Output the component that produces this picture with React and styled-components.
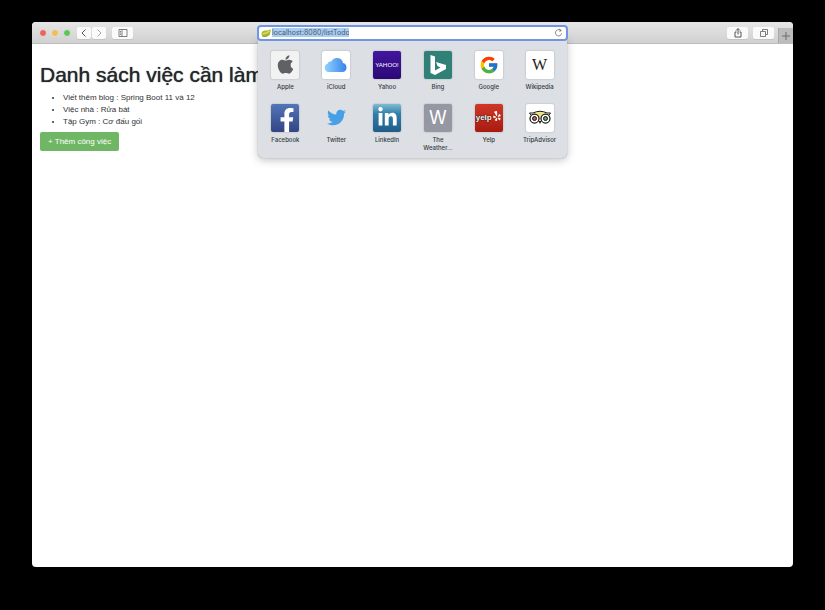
import React, { useId } from "react";
import styled, { createGlobalStyle, css } from "styled-components";
import { FaApple, FaFacebookF, FaLinkedinIn, FaTwitter, FaYelp } from "react-icons/fa";
import { FcGoogle } from "react-icons/fc";

const GlobalStyle = createGlobalStyle`
  *, *::before, *::after { box-sizing: border-box; }
  body {
    margin: 0;
    background: #000;
    font-family: "Liberation Sans", Arial, sans-serif;
  }
`;

const Desktop = styled.div`
  display: flex;
  min-height: 100vh;
  padding: 22px 32px 43px;
  background: #000;
`;

const BrowserWindow = styled.div`
  flex: 1;
  min-width: 0;
  display: flex;
  flex-direction: column;
  border-radius: 4px;
  background: #fff;
`;

const Toolbar = styled.header`
  display: grid;
  grid-template-columns: 1fr minmax(0, 311px) 1fr;
  align-items: center;
  height: 22px;
  border-radius: 4px 4px 0 0;
  border-bottom: 1px solid #bdbdbd;
  background: linear-gradient(#e6e6e6, #d0d0d0);
`;

const ToolGroup = styled.div`
  display: flex;
  align-items: center;
  align-self: stretch;
  justify-content: ${(p) => (p.$end ? "flex-end" : "flex-start")};
  padding-left: ${(p) => (p.$end ? "0" : "7px")};
`;

const TrafficLights = styled.div`
  display: flex;
  gap: 4px;
  margin-right: 6px;
`;

const Light = styled.button`
  width: 8px;
  height: 8px;
  padding: 0;
  border: 1px solid #e0dede;
  border-radius: 50%;
  background: ${(p) => p.$color};
`;

const ToolButton = styled.button`
  display: flex;
  align-items: center;
  justify-content: center;
  width: ${(p) => (p.$narrow ? "14px" : "21px")};
  height: 12px;
  padding: 0;
  border: 0;
  border-radius: 2px;
  background: #fafafa;
  color: ${(p) => (p.$faded ? "#a5a5a5" : "#555")};
  box-shadow: 0 1px 0 #c4c4c4;
`;

const NavPair = styled.div`
  display: flex;
  gap: 1px;
  margin-right: 6px;
`;

const ActionPair = styled.div`
  display: flex;
  gap: 5px;
  margin-right: 4px;
`;

const NewTab = styled.button`
  display: flex;
  align-items: center;
  justify-content: center;
  align-self: flex-end;
  width: 15px;
  height: 15px;
  padding: 0;
  border: 0;
  border-left: 1px solid #a9a9a9;
  background: #bcbcbc;
  color: #6c6c6c;
`;

const AddressArea = styled.div`
  position: relative;
`;

const AddressField = styled.div`
  position: relative;
  z-index: 2;
  display: flex;
  align-items: center;
  gap: 1px;
  height: 16px;
  padding: 0 3px 0 2px;
  border: 2px solid #6f95e4;
  border-radius: 4px;
  background: #fff;
`;

const AddressInput = styled.input`
  flex: none;
  width: 77px;
  height: 9px;
  padding: 0;
  border: 0;
  outline: 0;
  background: #a9cdf3;
  color: #4d5a6b;
  font: 7px/9px Inter, sans-serif;
`;

const Reload = styled.button`
  display: flex;
  margin-left: auto;
  padding: 0;
  border: 0;
  background: none;
  color: #555;
`;

const Favorites = styled.nav`
  position: absolute;
  z-index: 1;
  top: 14px;
  left: 1px;
  right: 1px;
  display: grid;
  grid-template-columns: repeat(6, 1fr);
  row-gap: 13px;
  padding: 12px 2px 6px;
  border-radius: 0 0 5px 5px;
  background: #dce0e5;
  box-shadow: 0 2px 8px #00000040, 0 0 1px #00000066;
`;

const Favorite = styled.a`
  display: flex;
  flex-direction: column;
  align-items: center;
  gap: 4px;
  min-width: 0;
  color: #35383c;
  font: 500 6px/8px Inter, sans-serif;
  text-align: center;
  text-decoration: none;
`;

const Tile = styled.span`
  display: flex;
  align-items: center;
  justify-content: center;
  width: 28px;
  height: 28px;
  overflow: hidden;
  border-radius: 2px;
  background: ${(p) => p.$fill};
  color: ${(p) => p.$ink || "#fff"};
  ${(p) => !p.$bare && css`box-shadow: 0 0 2px #00000040;`}
  ${(p) => p.$bottom && css`
    align-items: flex-end;
    justify-content: flex-end;
  `}
`;

const Label = styled.span`
  max-width: 36px;
  display: flex;
  justify-content: center;
`;

const YahooMark = styled.span`
  font: 6px/8px Lato, sans-serif;
`;

const WikipediaMark = styled.span`
  font: 16px/20px "Liberation Serif", serif;
`;

const LetterMark = styled.span`
  font: 18px/20px Inter, sans-serif;
`;

const YelpMark = styled.span`
  display: flex;
  align-items: center;
  color: #fff;
  font: 700 8px/12px "Liberation Sans", sans-serif;
  text-shadow: 0 0 1px #000, 0 0 1px #000;

  svg { margin-bottom: 4px; }
`;

const Page = styled.main`
  flex: 1;
  padding: 18px 8px;
  color: #303236;
`;

const Title = styled.h1`
  margin: 0;
  color: #26282c;
  font-size: 21px;
  line-height: 26px;
  font-weight: 400;
  text-shadow: 0 0 1px currentColor;
`;

const TodoList = styled.ul`
  margin: 4px 0;
  padding-left: 23px;
  font-size: 8px;
  line-height: 12px;
`;

const TodoItem = styled.li`
  height: 12px;
`;

const AddLink = styled.a`
  display: block;
  width: fit-content;
  padding: 4px 8px;
  border-radius: 2px;
  background: #6fb765;
  color: #fff;
  font-size: 8px;
  line-height: 11px;
  text-decoration: none;
`;

function Glyph({ size = 10, children }) {
  return (
    <svg width={size} height={size} viewBox="0 0 20 20" fill="none" stroke="currentColor" strokeWidth="2" aria-hidden="true">
      {children}
    </svg>
  );
}

function LeafIcon() {
  return (
    <svg width="10" height="10" viewBox="0 0 20 20" aria-hidden="true">
      <path d="M1 13C1 7 4 5 9 5C14 5 17 4 19 2C20 9 18 16 10 17C6 18 2 17 1 13Z" fill="#a8ba2b" />
      <path d="M3 12C8 11 13 10 17 6" fill="none" stroke="#d6da60" strokeWidth="3" />
      <path d="M2 16C7 18 14 17 17 12" fill="none" stroke="#7f9226" strokeWidth="1.5" />
    </svg>
  );
}

function CloudLogo() {
  const id = useId();
  return (
    <svg width="24" height="16" viewBox="0 0 48 32" aria-hidden="true">
      <defs>
        <linearGradient id={id} x1="0" x2="1">
          <stop offset="0" stopColor="#8fd3fb" />
          <stop offset="1" stopColor="#3b82ea" />
        </linearGradient>
      </defs>
      <path d="M10 30A8.5 8.5 0 0 1 7 13.500A6.500 6.500 0 0 1 14.500 9A12.500 12.500 0 0 1 38 12A9.300 9.300 0 0 1 38 30Z" fill={`url(#${id})`} />
    </svg>
  );
}

function BingLogo() {
  return (
    <svg width="20" height="26" viewBox="0 0 40 52" aria-hidden="true">
      <path d="M5 6L14 9V37L25 31L19 28L16 20L36 26V34L14 46L5 42Z" fill="#fff" />
    </svg>
  );
}

function OwlLogo() {
  return (
    <svg width="22" height="15" viewBox="0 0 44 30" aria-hidden="true">
      <path d="M9 6Q22 0 35 6L22 20Z" fill="#eee28a" />
      <path d="M1 6H8Q22 -1 36 6H43L40 10M1 6L4 10" fill="none" stroke="#171717" strokeWidth="2" />
      <circle cx="11" cy="17" r="9" fill="#fff" stroke="#171717" strokeWidth="2.500" />
      <circle cx="33" cy="17" r="9" fill="#fff" stroke="#171717" strokeWidth="2.500" />
      <circle cx="11" cy="17" r="4" fill="#c9534a" stroke="#171717" strokeWidth="2" />
      <circle cx="33" cy="17" r="4" fill="#54a266" stroke="#171717" strokeWidth="2" />
      <path d="M19 22L22 28L25 22Z" fill="#171717" />
    </svg>
  );
}

const favorites = [
  { name: "Apple", fill: "#f2f2f3", ink: "#606164", mark: <FaApple size={21} /> },
  { name: "iCloud", fill: "#fff", mark: <CloudLogo /> },
  { name: "Yahoo", fill: "linear-gradient(#4216a0, #2c0876)", mark: <YahooMark>YAHOO!</YahooMark> },
  { name: "Bing", fill: "#318078", mark: <BingLogo /> },
  { name: "Google", fill: "#fff", mark: <FcGoogle size={20} /> },
  { name: "Wikipedia", fill: "#fff", ink: "#222", mark: <WikipediaMark>W</WikipediaMark> },
  { name: "Facebook", fill: "linear-gradient(#5375b9, #334583)", bottom: true, mark: <FaFacebookF size={24} /> },
  { name: "Twitter", fill: "transparent", ink: "#46a0e6", bare: true, mark: <FaTwitter size={19} /> },
  { name: "LinkedIn", fill: "linear-gradient(#80bbd4, #2f7faa 35%, #205d88)", mark: <FaLinkedinIn size={21} /> },
  { name: "The Weather…", fill: "#9598a2", mark: <LetterMark>W</LetterMark> },
  { name: "Yelp", fill: "linear-gradient(#cf3827, #a81a10)", mark: <YelpMark>yelp<FaYelp size={10} /></YelpMark> },
  { name: "TripAdvisor", fill: "#fff", mark: <OwlLogo /> },
];

const todos = ["Viết thêm blog : Spring Boot 11 và 12", "Việc nhà : Rửa bát", "Tập Gym : Cơ đấu gối"];

export default function App() {
  return (
    <>
      <GlobalStyle />
      <Desktop>
        <BrowserWindow>
          <Toolbar>
            <ToolGroup>
              <TrafficLights>
                <Light $color="#ed6259" aria-label="Close" />
                <Light $color="#f4bd50" aria-label="Minimize" />
                <Light $color="#5cc653" aria-label="Zoom" />
              </TrafficLights>
              <NavPair>
                <ToolButton $narrow aria-label="Back"><Glyph><path d="M13 3L6 10L13 17" /></Glyph></ToolButton>
                <ToolButton $narrow $faded aria-label="Forward"><Glyph><path d="M7 3L14 10L7 17" /></Glyph></ToolButton>
              </NavPair>
              <ToolButton aria-label="Sidebar">
                <Glyph><path d="M2 3H18V17H2ZM8 3V17M4 7H6M4 10H6M4 13H6" strokeWidth="1.500" /></Glyph>
              </ToolButton>
            </ToolGroup>
            <AddressArea>
              <AddressField>
                <LeafIcon />
                <AddressInput aria-label="Address" defaultValue="localhost:8080/listTodo" />
                <Reload aria-label="Reload">
                  <Glyph size={9}><path d="M16 7A7 7 0 1 0 17 12M11 2L16 5L12 9" strokeWidth="1.500" /></Glyph>
                </Reload>
              </AddressField>
              <Favorites aria-label="Favorites">
                {favorites.map((f) => (
                  <Favorite key={f.name} href="#">
                    <Tile $fill={f.fill} $ink={f.ink} $bare={f.bare} $bottom={f.bottom}>{f.mark}</Tile>
                    <Label>{f.name}</Label>
                  </Favorite>
                ))}
              </Favorites>
            </AddressArea>
            <ToolGroup $end>
              <ActionPair>
                <ToolButton aria-label="Share">
                  <Glyph><path d="M7 8H4V18H16V8H13M10 13V2M6 5L10 1L14 5" /></Glyph>
                </ToolButton>
                <ToolButton aria-label="Tabs">
                  <Glyph><path d="M7 6V3H17V13H14M3 7H13V17H3Z" strokeWidth="1.500" /></Glyph>
                </ToolButton>
              </ActionPair>
              <NewTab aria-label="New tab"><Glyph><path d="M10 2V18M2 10H18" /></Glyph></NewTab>
            </ToolGroup>
          </Toolbar>
          <Page>
            <Title>Danh sách việc cần làm</Title>
            <TodoList>
              {todos.map((t) => <TodoItem key={t}>{t}</TodoItem>)}
            </TodoList>
            <AddLink href="#">+ Thêm công việc</AddLink>
          </Page>
        </BrowserWindow>
      </Desktop>
    </>
  );
}
